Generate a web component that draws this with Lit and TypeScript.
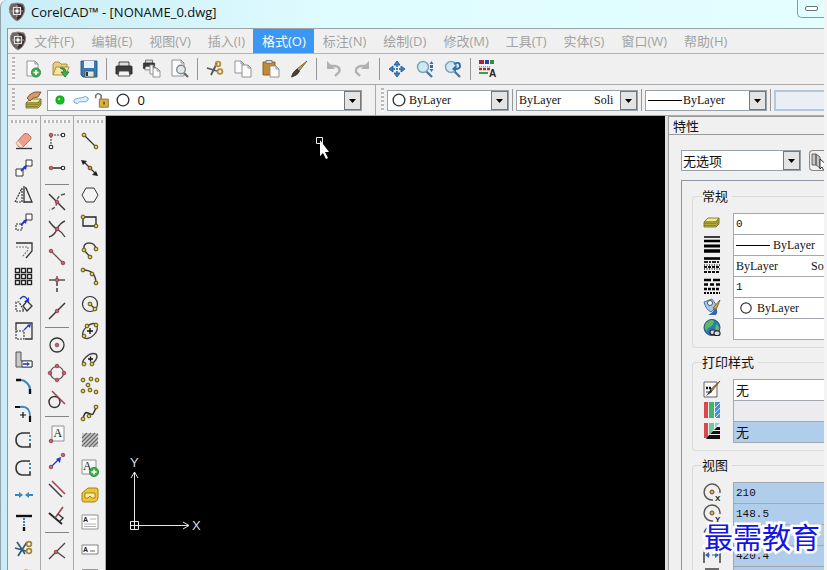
import { LitElement, html, svg, css, nothing } from "lit";
import { customElement, property } from "lit/decorators.js";
import { classMap } from "lit/directives/class-map.js";

const dot = (x: number, y: number, c = "#e0cf3a") =>
  svg`<circle cx=${x} cy=${y} r="1.9" fill=${c} stroke="#4a4417" stroke-width=".9"/>`;
const red = (x: number, y: number) =>
  svg`<circle cx=${x} cy=${y} r="1.8" fill="#c5606c" stroke="#8b3a48" stroke-width=".8"/>`;
const ring = (x: number, y: number) =>
  svg`<circle cx=${x} cy=${y} r="1.8" fill="#fff" stroke="#222" stroke-width="1.1"/>`;
const ln = (d: string, c = "#333", w = 1.3, dash = "") =>
  svg`<path d=${d} fill="none" stroke=${c} stroke-width=${w} stroke-dasharray=${dash || "none"}/>`;
const fl = (d: string, c: string, s = "none") =>
  svg`<path d=${d} fill=${c} stroke=${s} stroke-width=".9"/>`;
const letter = (x: number, y: number, t: string, size: number, serif = false) =>
  svg`<text x=${x} y=${y} font-size=${size} font-weight=${serif ? "normal" : "bold"} fill="#222" font-family=${serif ? "Liberation Serif, serif" : "Liberation Sans, sans-serif"}>${t}</text>`;
const plus = (x: number, y: number) =>
  svg`<circle cx=${x} cy=${y} r="4.6" fill="#3fae49" stroke="#23813a" stroke-width=".8"/>${ln(`M${x - 2.6} ${y}h5.2M${x} ${y - 2.6}v5.2`, "#fff", 1.6)}`;
const page = (x: number, y: number, w = 8, h = 11) =>
  fl(`M${x} ${y}h${w - 3}l3 3v${h - 3}h-${w}z M${x + w - 3} ${y}v3h3`, "#fbfbfb", "#888");
const lens = svg`${ln("M11 12l6 6", "#4b7a9c", 2.4)}<circle cx="8" cy="8" r="5.500" fill="#cfe8f6" stroke="#7fa5bd" stroke-width="1.5"/>`;
const scissors = svg`${ln("M2 9l10 3M6 16l6-12", "#555", 1.8)}<circle cx="13" cy="5" r="2.300" fill="none" stroke="#b58d2e" stroke-width="1.8"/><circle cx="15" cy="12.500" r="2.400" fill="none" stroke="#b58d2e" stroke-width="1.8"/>`;
const printer = svg`${fl("M5 3h10v5h-10z", "#ddd", "#333")}${fl("M2 8q0-1 1-1h14q1 0 1 1v7h-16z", "#3c3c3c", "#222")}${fl("M5 12h10l1 5h-12z", "#f4f4f4", "#444")}`;
const shield = svg`${fl("M4 2Q10 0 16 2Q19 6 17 11Q15 17 10 19Q5 17 3 11Q1 6 4 2z", "#6f6260", "#8e8888")}${fl("M10 2Q17 2 17 8Q15 16 10 18z", "#372c2c")}<rect x="6.500" y="5.500" width="7" height="7" fill="#4d4444" stroke="#e2e2e2" stroke-width="1.200"/>${ln("M10 3v12M4 9h12", "#ccc", 0.8)}<rect x="8.500" y="7.500" width="3" height="3" fill="#fff"/>`;
const layers = svg`${fl("M3 13l4-4h11l-3 4z", "#f0eb8c", "#77742c")}${fl("M3 13h12l3-4v6l-3 3h-12z", "#c8c04a", "#77742c")}${ln("M3 14.700h12l3-3.500M3 16.400h12l3-3.500", "#6f6b25", 0.8)}`;
const aBox = svg`${fl("M5 2h12v15h-12z", "#fafafa", "#888")}${letter(6.5, 13, "A", 12, true)}`;
const gauge = (t: string) => svg`<path d="M18 11A8 8 0 1 0 11 18" fill="none" stroke="#555" stroke-width="1.4"/><circle cx="10" cy="10" r="2" fill="#d8b26a" stroke="#6b4c1c"/>${t ? letter(13, 19, t, 8) : nothing}`;

const icons: Record<string, unknown> = {
  shield,
  new: svg`${page(4, 2, 11, 15)}${plus(13, 13.5)}`,
  open: svg`${fl("M2 16v-11l2-2h4l2 2h6v3", "#e8cd83", "#a98637")}${fl("M2 16l3-8h13l-3 8z", "#f7e3a4", "#a98637")}${fl("M9 9q6-1 6 4h3l-4 5l-4-5h3q0-3-4-4z", "#3fae49", "#23813a")}`,
  save: svg`${fl("M2 2h16v16h-14l-2-2z", "#3d78b8", "#24527f")}${fl("M5 2h10v7h-10z", "#e9f1f8")}${fl("M6 12h9v6h-9z", "#e3e6e9", "#365")}${fl("M7 13h2v4h-2z", "#333")}`,
  print: printer,
  prints: svg`<g transform="translate(0 -1) scale(.7)">${printer}</g>${page(8, 6, 6, 9)}${page(11, 9, 7, 9)}`,
  preview: svg`${page(2, 1, 12, 16)}${ln("M14 14l4 4", "#666", 2.2)}<circle cx="11" cy="10.500" r="4.300" fill="#dfe8ee" stroke="#888" stroke-width="1.4"/>`,
  cut: scissors,
  copy: svg`${page(2, 2, 9, 12)}${page(9, 6, 9, 12)}`,
  paste: svg`${fl("M2 3h12v13h-12z", "#c38a35", "#835a1c")}${fl("M5 1.500h6v3h-6z", "#d6d6d6", "#777")}${page(9, 7, 9, 11)}`,
  brush: svg`${fl("M18 2l-8 10-2-2z", "#cf9a50", "#7c5a2d")}${fl("M8 10l2.500 2.500q-2 4-8 5.500q1-5 5.500-8z", "#4a4038", "#333")}`,
  undo: svg`${ln("M5 7h6q6 1 4 6l-4 4", "#b0b0b0", 2.4)}${fl("M3 2v8h8z", "#b0b0b0")}`,
  redo: svg`${ln("M15 7h-6q-6 1-5 6l4 4", "#b0b0b0", 2.4)}${fl("M17 2v8h-8z", "#b0b0b0")}`,
  pan: svg`${fl("M10 2l3 4h-6zM10 18l3-4h-6zM2 10l4-3v6zM18 10l-4-3v6z", "#3c83c4", "#215a94")}${ln("M10 6v8M6 10h8", "#3c83c4", 2, "2 1")}`,
  zoom: svg`${lens}${fl("M16.500 2l2 3h-4zM16.500 13l2-3h-4zM15 6h3v3h-3z", "#2f6eb0")}`,
  zoomback: svg`${lens}${ln("M11 5q6-3 6 2q0 3-5 3", "#2f6eb0", 2)}${fl("M13 6v7l-4-3z", "#2f6eb0")}`,
  styles: svg`${fl("M1 1h5v4h-5z", "#a02648")}${fl("M7 1h4v4h-4z", "#2c3fae")}${fl("M12 1h4v4h-4z", "#2d9238")}${ln("M1 7.500h11", "#999", 1, "1 1")}${ln("M1 10h11", "#b03040", 2.5, "3 1")}${ln("M1 14h9", "#3aa048", 2)}${letter(11, 18, "A", 10)}`,
  layerman: svg`${layers}${fl("M4 8q3-5 8-6h6l-3 5q-6 0-8 4z", "#d59a6c", "#7b4a2a")}`,
  bulb: svg`<circle cx="10" cy="10" r="4.500" fill="#16c222" stroke="#0b8414"/>${fl("M8 8h2v2h-2z", "#9df5a0")}`,
  cloud: svg`${fl("M2 11q1-3 5-3t8-2q4 1 3 4q-2 3-6 2t-6 2q-4 0-4-3z", "#d8eefa", "#5a9ac4")}`,
  lock: svg`${ln("M3 8v-3q3-4 6 0v4", "#777", 1.8)}${fl("M7 9h10v9h-10z", "#d8b33e", "#7c6420")}${fl("M11.500 12h1.500v3h-1.500z", "#4d3d10")}`,
  circle: svg`<circle cx="10" cy="10" r="6.500" fill="#fff" stroke="#333" stroke-width="1.500"/>`,
  erase: svg`${fl("M2 12l8-9q2-1 4 0l3 3q0 2-1 3l-7 7h-4z", "#efa08c", "#ad6a5a")}${fl("M2 12l4 4h3l-5-6z", "#fbdcd3")}${ln("M2 17.500h16", "#333")}`,
  copyobj: svg`${fl("M12 2h6v6h-6zM2 11h7v7h-7z", "#fff", "#222")}${ln("M7 13l5-5", "#2436c8", 1.8)}${fl("M13 7l-1 5-3-3z", "#2436c8")}`,
  mirror: svg`${ln("M8 3v14h-7z", "#333", 1.2, "2 1")}${ln("M10 1v17M11 3h1l6 14h-8", "#333")}`,
  move: svg`${fl("M12 2h6v6h-6z", "#fff", "#222")}${ln("M2 12h6v6h-6z", "#333", 1.1, "2 1")}${ln("M7 13l5-5", "#2436c8", 1.8)}${fl("M13 7l-1 5-3-3z", "#2436c8")}`,
  offset: svg`${ln("M2 3h16v8l-6 7")}${ln("M2 7h12v3l-6 7", "#777", 1.1, "2 1")}`,
  pattern: svg`${[2, 8, 14].map((y) => [2, 8, 14].map((x) => svg`<rect x=${x - 0.5} y=${y - 0.5} width="4" height="4" fill="#fff" stroke="#222" stroke-width="1.4"/>`))}`,
  rotate: svg`${ln("M2 8v9h8l-5-9z", "#333", 1.1, "2 1")}${ln("M9 12l4-5 5 5-5 5z", "#333")}${ln("M6 5q4-5 7 0", "#2436c8", 1.4)}${fl("M15 3v5h-5z", "#2436c8")}`,
  scale: svg`${ln("M2 9v-7h16v16h-7", "#333")}${ln("M2 10h8v8h-8z", "#333", 1.1, "2 1")}${ln("M10 9l5-5", "#2436c8")}${fl("M17 3l-1 4-3-3z", "#2436c8")}`,
  stretch: svg`${fl("M2 3h5v9h11v6h-16z", "#c9c9c9", "#444")}${fl("M8 12h10v6h-10z", "#fff", "#333")}${ln("M9 15h5", "#2436c8", 1.6)}${fl("M16 15l-3-2v4z", "#2436c8")}`,
  fillet: svg`${ln("M2 4h5M16 13v5", "#111", 2.4)}${ln("M7 4q3 0 6 3t3 6", "#3a86be", 2.2)}`,
  chamfer: svg`${ln("M1 4h5M16 13v6", "#111", 2.2)}${ln("M6 4q5-1 8 2q2 3 2 7", "#3a86be", 1.8)}${ln("M6 12h6M9 9v6", "#111", 1.2)}`,
  split: svg`${ln("M16 3h-8q-6 1-6 7t6 7h8v-3", "#333", 1.6)}${ln("M16 5v9", "#3a86be", 2, "2 2")}`,
  weld: svg`${ln("M1 10h7M19 10h-7", "#3a86be", 2)}${fl("M9 10l-4-3v6zM11 10l4-3v6z", "#3a86be")}`,
  trim: svg`${ln("M2 4h16", "#111", 2.4)}${ln("M10 6v8", "#3a86be", 2, "2 1")}${ln("M10 15v4", "#111", 2.4)}`,
  explode: svg`${ln("M3 3l8 12M13 3l-9 14M1 9l11 3", "#345a7c", 1.7)}<circle cx="15" cy="5" r="2.400" fill="none" stroke="#a58434" stroke-width="1.7"/><circle cx="15" cy="12" r="2.400" fill="none" stroke="#a58434" stroke-width="1.7"/>`,
  ball: svg`<circle cx="12" cy="8" r="5" fill="#e8a768" stroke="#925b2a"/>`,
  track: svg`${ln("M4 4h10M4 5v9", "#444", 1.1, "2 1")}${red(4, 4)}${ring(16, 4)}${ring(4, 16)}`,
  ext: svg`${ln("M4 10h11", "#222", 1.4)}${red(4, 10)}${ring(16, 10)}`,
  intersect: svg`${ln("M2 2l16 16", "#333", 1.4)}${ln("M18 2q-8 1-8 8q-1 7-8 8", "#555", 1.4, "4 2")}${red(10, 10)}`,
  apparent: svg`${ln("M2 2q4 6 8 8q5 3 8 8M18 2q-5 2-8 8q-2 6-8 8", "#444", 1.4)}${red(10, 10)}`,
  endpt: svg`${ln("M5 5l11 11", "#7a4b55", 1.3)}${red(4, 4)}${red(16, 16)}`,
  midpt: svg`${ln("M2 6h16M10 2v4", "#555", 1.4)}${ln("M10 8v11", "#333", 1.4, "4 2")}${red(10, 6)}`,
  near: svg`${ln("M2 18l16-16", "#333", 1.4)}${red(10, 10)}`,
  center: svg`<circle cx="10" cy="10" r="7" fill="none" stroke="#333" stroke-width="1.3"/>${red(10, 10)}`,
  quad: svg`<circle cx="10" cy="10" r="6.500" fill="none" stroke="#555" stroke-width="1.2"/>${red(10, 3)}${red(17, 10)}${red(10, 17)}${red(3, 10)}`,
  tangent: svg`<circle cx="7.500" cy="12" r="5.500" fill="none" stroke="#333" stroke-width="1.400"/>${ln("M5 1l13 13", "#a0414e", 1.5)}`,
  insert: svg`${aBox}${red(4, 17)}`,
  node: svg`${ln("M5 15l8-8", "#2436c8", 1.2)}${fl("M14 6l-1 6-4-4z", "#2436c8")}${red(4, 16)}${red(16, 4)}`,
  parallel: svg`${ln("M2 5l13 13", "#444", 1.6)}${ln("M5 2l13 13", "#b0414e", 1.6)}`,
  perp: svg`${ln("M2 7l13 11", "#222", 1.8)}${ln("M8 12l8-11", "#a0414e", 1.6)}${ln("M11 8l5 4-4 4", "#333", 1.4)}`,
  snap: svg`${ln("M2 19l16-16M10 12l8 6", "#444", 1.3)}${red(9, 12)}`,
  hook: svg`${ln("M3 3v14M3 10h4q4 2 10 2", "#333", 1.4)}`,
  line: svg`${ln("M4 4l12 12")}${dot(4, 4)}${dot(16, 16)}`,
  xline: svg`${ln("M3 3l14 14")}${fl("M1 2l6 1-4 4zM18 18l-6-1 4-4z", "#222")}${dot(10, 10, "#e08a3a")}`,
  polygon: svg`${fl("M6 3h8l4 7-4 7h-8l-4-7z", "#f4f4f4", "#222")}`,
  rect: svg`${ln("M3 5h13v9h-13z", "#222")}${dot(3, 5)}${dot(16, 14)}`,
  arc3: svg`${ln("M4 10q-1-7 5-7q6 0 7 6M4 10l7 8", "#444", 1.5)}${dot(4, 10)}${dot(16, 9)}${dot(10, 17)}`,
  arc: svg`${ln("M3 3q13 0 13 14", "#444", 1.4)}${dot(3, 3)}${dot(12, 7)}${dot(16, 16)}`,
  circ: svg`<circle cx="10" cy="10" r="7.500" fill="none" stroke="#333" stroke-width="1.200"/>${ln("M10 10l5 5")}${dot(10, 10)}${dot(15, 15)}`,
  ellipse: svg`<ellipse cx="10" cy="10" rx="9" ry="5.500" transform="rotate(-45 10 10)" fill="none" stroke="#444" stroke-width="1.300"/>${ln("M7 10h6M10 7v6", "#111")}${dot(16, 4)}${dot(7, 5)}${dot(4, 15)}`,
  earc: svg`${ln("M4 15q-3-2 2-7t10-3q3 4-4 10", "#444", 1.5)}${ln("M8 10h5M10.500 7.500v5", "#111")}${dot(4, 15)}${dot(12, 15)}`,
  points: svg`${dot(3, 4)}${dot(11, 3)}${dot(17, 4)}${dot(8, 9)}${dot(3, 15)}${dot(10, 14)}${dot(16, 16)}`,
  spline: svg`${ln("M3 17q1-9 5-7t5 1q2-4 4-8", "#333", 1.5)}${dot(3, 16)}${dot(9, 13)}${dot(16, 4)}`,
  hatch: svg`${fl("M2 3h16v14h-16z", "#c6c6c6")}${ln("M2 8l5-5M2 12l9-9M2 16l13-13M5 17l13-13M9 17l9-9M13 17l5-5", "#6a6a6a", 1.2)}`,
  textadd: svg`${fl("M2 2h14v14h-14z", "#f8f8f8", "#888")}${letter(3, 12, "A", 12, true)}${plus(14, 14)}`,
  tag: svg`${fl("M2 8l6-5h8q2 0 2 2v7q0 5-5 5h-9q-2 0-2-2z", "#ecc735", "#9a761c")}${fl("M5 8h10v5h-3l-2-2-2 2h-3z", "#fff1a2", "#9a761c")}`,
  note: svg`${fl("M2 3h16v14h-16z", "#fdfdfd", "#888")}${letter(3, 10, "A", 7)}${ln("M10 7h6M4 12h12M4 14.500h12", "#aaa", 0.9)}`,
  label: svg`${fl("M2 6h16v9h-16z", "#fdfdfd", "#777")}${letter(3, 13, "A", 7)}${ln("M10 12h5", "#888")}`,
  table: svg`${fl("M2 3h16v14h-16z", "#777", "#333")}${ln("M2 5h16", "#e0cf3a", 2, "3 2")}`,
  layers: svg`<g transform="translate(-1 -4)">${layers}</g>`,
  weight: svg`${ln("M2 3h16", "#000", 1.5)}${ln("M2 7h16", "#000", 2.5)}${ln("M2 12h16", "#000", 3)}${ln("M2 17h16", "#000", 3.5)}`,
  ltype: svg`${ln("M2 3.500h16", "#000", 2.6)}${ln("M2 7h16", "#222", 2, "4 1 2 1")}${ln("M2 10h16M2 14h16", "#333", 1.6, "1 1.500")}${ln("M2 12h16M2 17h16", "#111", 2, "3 1")}`,
  lscale: svg`${ln("M2 4h16", "#000", 2.6, "7 2")}${ln("M2 8.500h16", "#000", 2.4, "4 2")}${ln("M2 13h16", "#000", 2.4, "3 1")}${ln("M2 17h16", "#000", 2.2, "2 1")}`,
  paint: svg`${fl("M2 5l8-3 5 7-6 6q-5-2-7-10z", "#a9c7e4", "#456d97")}<circle cx="8" cy="6" r="2.500" fill="#fff" stroke="#456"/>${fl("M18 3l-4 10-3-2z", "#e2a343", "#865c1e")}${fl("M13 11q4 3 1 7h-8q5-2 7-7z", "#3168b5")}`,
  globe: svg`<circle cx="10" cy="9.500" r="8" fill="#2b79be" stroke="#1b4f83"/>${fl("M4 5q5-5 8-2q-1 5-4 6t-3 4q-4-3-1-8zM14 6q4 2 3 6h-4z", "#5fbb58")}<rect x="8" y="12" width="6" height="4.500" rx="2" fill="#ddd" stroke="#222" stroke-width="1.200"/><rect x="12" y="13" width="6" height="4.500" rx="2" fill="#ddd" stroke="#222" stroke-width="1.200"/>`,
  pstyle: svg`${fl("M2 3h13v15h-13z", "#f8f8f8", "#555")}${ln("M4 9h6", "#111", 2.4, "2 1")}${ln("M4 13h4", "#777", 1.4)}${fl("M18 2l-8 10-2-1z", "#c88b48", "#74491d")}${fl("M9 10l1 3-6 4z", "#333")}`,
  ptable: svg`${fl("M2 2h4v16h-4z", "#d8484c")}${fl("M7 2h5v16h-5z", "#43b56a")}${fl("M13 2h5v16h-5z", "#4b8fce")}${ln("M13 8l5-5M13 13l5-5M13 18l5-5", "#cfe2f3", 1)}`,
  pcolor: svg`${fl("M2 2h4v15h-4z", "#d8484c")}${fl("M7 2h5v6l-5 6z", "#72c79c")}${fl("M13 2h5l-5 5z", "#9cc4e6")}${fl("M15 6h3v3h-6zM11 10h7v3h-10zM7 14h11v4h-14z", "#111")}`,
  gx: gauge("X"),
  gy: gauge("Y"),
  gz: gauge(""),
  hsize: svg`${ln("M2 3v15M18 3v15", "#333", 1.4)}${ln("M4 10h12", "#3a63b5", 1.2, "4 2")}${fl("M3 10l4-3v6zM17 10l-4-3v6z", "#3a63b5")}`,
  vsize: svg`${ln("M3 3h14", "#333", 1.4)}${ln("M10 5v12", "#3a63b5", 1.6)}`,
  pick: svg`${fl("M2 3h4v11h-4zM6 3l4 3v11l-4-3z", "#c5c5c5", "#555")}${fl("M10 8l8 7h-4l2 4-2 1-2-4-2 2z", "#fff", "#222")}`,
};

@customElement("cad-icon")
export class CadIcon extends LitElement {
  @property() name = "";
  static styles = css`
    :host { display: block; width: 20px; height: 20px; flex: none; }
    svg { display: block; width: 100%; height: 100%; }
  `;
  render() {
    return html`<svg viewBox="0 0 20 20" aria-hidden="true">${icons[this.name]}</svg>`;
  }
}

const menus = ["文件(F)", "编辑(E)", "视图(V)", "插入(I)", "格式(O)", "标注(N)", "绘制(D)", "修改(M)", "工具(T)", "实体(S)", "窗口(W)", "帮助(H)"];
const standard = "new open save | print prints preview | cut copy paste brush | undo redo | pan zoom zoomback | styles".split(" ");
const columns = [
  "erase copyobj mirror move offset pattern rotate scale stretch fillet chamfer split split weld trim explode ball",
  "track ext | intersect apparent endpt midpt near | center quad tangent | insert node parallel perp | snap hook",
  "line xline polygon rect arc3 arc circ ellipse earc points spline hatch textadd tag note label table",
].map((c) => c.split(" "));

type Row = { icon: string; value: string; kind?: string; lead?: string };
const groups: { title: string; rows: Row[] }[] = [
  {
    title: "常规",
    rows: [
      { icon: "layers", value: "0" },
      { icon: "weight", value: "ByLayer", kind: "serif", lead: "line" },
      { icon: "ltype", value: "ByLayer\u00a0\u00a0\u00a0\u00a0\u00a0\u00a0\u00a0\u00a0\u00a0\u00a0\u00a0Solid", kind: "serif" },
      { icon: "lscale", value: "1" },
      { icon: "paint", value: "ByLayer", kind: "serif", lead: "circle" },
      { icon: "globe", value: "" },
    ],
  },
  {
    title: "打印样式",
    rows: [
      { icon: "pstyle", value: "无", kind: "cjk" },
      { icon: "ptable", value: "", kind: "off" },
      { icon: "pcolor", value: "无", kind: "cjk blue" },
    ],
  },
  {
    title: "视图",
    rows: [
      { icon: "gx", value: "210", kind: "blue" },
      { icon: "gy", value: "148.5", kind: "blue" },
      { icon: "gz", value: "", kind: "blue" },
      { icon: "hsize", value: "420.4", kind: "blue" },
      { icon: "vsize", value: "", kind: "blue" },
    ],
  },
];

@customElement("app-root")
export class AppRoot extends LitElement {
  static styles = css`
    :host {
      display: block;
      height: 100vh;
      overflow: hidden;
      background: #f4f4f4;
      padding-right: 3px;
      box-sizing: border-box;
      font: 13px/18px "Open Sans", "Noto Sans CJK SC", sans-serif;
      color: #111;
    }
    * { box-sizing: border-box; }
    button, select, input { font: inherit; color: inherit; margin: 0; padding: 0; border: 0; border-radius: 0; background: none; }
    .window {
      display: flex;
      flex-direction: column;
      height: 100%;
      padding-left: 6px;
      border-left: 1px solid #8fa3aa;
      border-top-left-radius: 7px;
      background: linear-gradient(90deg, #c9ecf6, #dffcff 40%, #e2feff);
    }
    .title { display: flex; align-items: center; gap: 4px; height: 28px; padding-bottom: 4px; flex: none; }
    .title h1 { flex: 1; margin: 0; font: inherit; white-space: nowrap; }
    .min { align-self: flex-start; width: 27px; height: 18px; border: 1px solid #8b979b; border-width: 0 0 1px 1px; border-bottom-left-radius: 5px; display: grid; place-items: center; }
    .min i { width: 13px; height: 5px; border: 1px solid #6a7073; border-radius: 2px; background: #fff; }
    .frame { flex: 1; min-height: 0; display: flex; flex-direction: column; background: #f0f0f0; border-left: 1px solid #8f9699; border-top: 1px solid #9aa3a5; }
    .menu { display: flex; align-items: stretch; height: 25px; flex: none; border-bottom: 1px solid #b4b4b4; }
    .menu cad-icon { align-self: center; margin-right: -3px; }
    .menu button { padding: 0 8px 0 9px; color: #a2a2a2; white-space: nowrap; }
    .menu button.on { background: #3b97f3; color: #fff; }
    .bar { display: flex; align-items: center; height: 31px; flex: none; border-bottom: 1px solid #a9a9a9; padding-left: 4px; }
    .grip { width: 3px; height: 24px; flex: none; background: repeating-linear-gradient(#b8b8b8 0 2px, #f8f8f8 2px 4px); }
    .tool { display: grid; place-items: center; width: 28px; height: 27px; flex: none; }
    .bar .grip + .tool { margin-left: 4px; }
    .sep { width: 1px; height: 22px; margin: 0 3px; background: #979797; flex: none; }
    .combo { display: flex; align-items: center; gap: 1px; height: 21px; min-width: 0; flex: none; width: 122px; border: 1px solid #98a0a8; background: #fff; padding-left: 2px; }
    .combo.wide { width: 315px; }
    .combo select {
      flex: 1; min-width: 0; height: 19px; appearance: none; outline: 0;
      background: url("data:image/svg+xml,%3Csvg xmlns='http://www.w3.org/2000/svg' width='17' height='19'%3E%3Crect x='.5' y='.5' width='16' height='18' fill='%23e4e4e4' stroke='%23777'/%3E%3Cpath d='M5 8h7l-3.500 4z'/%3E%3C/svg%3E") right center no-repeat;
      padding-right: 18px;
    }
    .combo .serif { font: 12px/16px "Liberation Serif", serif; }
    .combo .small { width: 18px; height: 18px; }
    .combo.wide .small { width: 20px; }
    .stroke { width: 34px; height: 1px; background: #000; flex: none; }
    .edge { align-self: stretch; width: 1px; margin: 0 5px 0 13px; background: #a9a9a9; flex: none; }
    .edge + .grip { margin-right: 3px; }
    .slot { flex: 1; height: 21px; border: 2px solid #b4c8da; border-right: 0; background: #e9eff5; min-width: 0; }
    .body { flex: 1; min-height: 0; display: flex; overflow: hidden; }
    .col { display: flex; flex-direction: column; align-items: center; width: 33px; flex: none; padding-top: 4px; border-right: 1px solid #aaa; overflow: hidden; }
    .col:last-of-type { width: 32px; }
    .col .hgrip { width: 26px; height: 3px; flex: none; margin-bottom: 4px; background: repeating-linear-gradient(90deg, #b8b8b8 0 2px, #f8f8f8 2px 4px); }
    .col .tool:nth-of-type(4n) { height: 28px; }
    .col .rule { width: 24px; height: 1px; margin: 3px 0; background: #858585; flex: none; }
    .canvas { flex: 1; min-width: 0; position: relative; background: #000; overflow: hidden; }
    .ucs { position: absolute; left: 20px; bottom: 35px; width: 80px; height: 80px; }
    .pointer { position: absolute; left: 209px; top: 19px; width: 16px; height: 26px; }
    .panel { width: 159px; flex: none; border-left: 3px solid #dedede; display: flex; flex-direction: column; position: relative; }
    .panel h2 { margin: 0; font: inherit; height: 19px; padding-left: 4px; border: 1px solid #9a9a9a; border-right: 0; flex: none; }
    .picker { display: flex; gap: 8px; padding: 15px 0 9px 12px; border-left: 1px solid #9a9a9a; }
    .picker .combo { width: 120px; padding-left: 1px; }
    .picker button { flex: 1; height: 21px; min-width: 0; overflow: hidden; border: 1px solid #888; border-right: 0; border-radius: 4px 0 0 4px; }
    .scroll { flex: 1; min-height: 0; border-left: 1px solid #9a9a9a; padding-left: 12px; overflow: hidden; display: flex; }
    .list { flex: 1; min-width: 0; border: 1px solid #8d97a1; border-width: 1px 0 0 1px; padding: 6px 0 0 10px; overflow: hidden; }
    fieldset { min-width: 0; margin: 0 0 5px; padding: 8px 0 8px 9px; border: 1px solid #dadada; border-right: 0; border-radius: 4px 0 0 4px; }
    legend { padding: 0 4px 0 0; height: 18px; }
    .row { display: flex; align-items: flex-start; gap: 11px; height: 21px; }
    .field { display: flex; align-items: center; flex: 1; min-width: 0; height: 22px; padding-left: 2px; border: 1px solid #a3a8b0; border-right: 0; background: #fff; overflow: hidden; }
    .field input { flex: 1; min-width: 0; height: 20px; outline: 0; font: 11px/20px "Liberation Mono", monospace; }
    .field.serif input { font: 12px/20px "Liberation Serif", serif; }
    .field.cjk input { font: 13px/20px "Noto Sans CJK SC", sans-serif; }
    .field.blue { background: #b1cdec; }
    .field.off { background: #ececf0; }
    .field .small { height: 16px; margin-right: 1px; }
    .field .stroke { margin-right: 3px; }
    .brand { position: absolute; right: 4px; bottom: 17px; font: 400 29px/34px "Noto Sans CJK SC", sans-serif; color: #1414e6; white-space: nowrap; -webkit-text-stroke: 5px #fff; paint-order: stroke fill; }
  `;

  private tool(name: string, rule = "sep") {
    return name === "|"
      ? html`<span class=${rule}></span>`
      : html`<button class="tool" aria-label=${name}><cad-icon name=${name}></cad-icon></button>`;
  }

  private lead(kind?: string) {
    if (kind === "line") return html`<span class="stroke"></span>`;
    return kind ? html`<cad-icon class="small" name=${kind}></cad-icon>` : nothing;
  }

  private combo(label: string, value: string, lead?: string) {
    return html`<div class="combo">
      ${this.lead(lead)}
      <select class="serif" aria-label=${label}><option>${value}</option></select>
    </div>`;
  }

  private row(r: Row) {
    return html`<label class="row">
      <cad-icon name=${r.icon}></cad-icon>
      <span class="field ${r.kind ?? ""}">${this.lead(r.lead)}<input aria-label=${r.icon} .value=${r.value} ?disabled=${r.kind === "off"} /></span>
    </label>`;
  }

  render() {
    return html`
      <div class="window">
        <header class="title">
          <cad-icon name="shield"></cad-icon>
          <h1>CorelCAD™ - [NONAME_0.dwg]</h1>
          <button class="min" aria-label="最小化"><i></i></button>
        </header>
        <div class="frame">
          <nav class="menu">
            <cad-icon name="shield"></cad-icon>
            ${menus.map((m, i) => html`<button class=${classMap({ on: i === 4 })}>${m}</button>`)}
          </nav>
          <div class="bar"><span class="grip"></span>${standard.map((n) => this.tool(n))}</div>
          <div class="bar">
            <span class="grip"></span>${this.tool("layerman")}
            <div class="combo wide">
              ${["bulb", "cloud", "lock", "circle"].map((n) => this.lead(n))}
              <select aria-label="图层"><option>\u00a00</option></select>
            </div>
            <span class="edge"></span><span class="grip"></span>
            ${this.combo("颜色", "ByLayer", "circle")}<span class="sep"></span>
            ${this.combo("线型", "ByLayer\u00a0\u00a0\u00a0\u00a0\u00a0\u00a0\u00a0\u00a0\u00a0\u00a0\u00a0Soli")}<span class="sep"></span>
            ${this.combo("线宽", "ByLayer", "line")}<span class="sep"></span>
            <span class="slot"></span>
          </div>
          <div class="body">
            ${columns.map((c) => html`<div class="col"><span class="hgrip"></span>${c.map((n) => this.tool(n, "rule"))}</div>`)}
            <main class="canvas">
              <svg class="ucs" viewBox="0 0 80 80" fill="none" stroke="#e8e8e8">
                <path d="M8.500 75V17M5 23l3.500-6 3.500 6M4 70.500H62M57 67l6 3.500-6 3.500M4.500 66.500h8v8h-8z" />
                <text x="4" y="12" font-size="13" font-family="Liberation Sans, sans-serif" fill="#ddd" stroke="none">Y</text>
                <text x="66" y="75" font-size="13" font-family="Liberation Sans, sans-serif" fill="#ddd" stroke="none">X</text>
              </svg>
              <svg class="pointer" viewBox="0 0 16 26">
                <path d="M1.500 2.500h6v6h-6z" fill="none" stroke="#eee" />
                <path d="M5 5v16l3-3 3 6 2-1-3-6h4z" fill="#fff" />
              </svg>
            </main>
            <aside class="panel">
              <h2>特性</h2>
              <div class="picker">
                <div class="combo"><select aria-label="选择"><option>无选项</option></select></div>
                <button aria-label="选取"><cad-icon name="pick"></cad-icon></button>
              </div>
              <div class="scroll">
                <div class="list">
                  ${groups.map((g) => html`<fieldset><legend>${g.title}</legend>${g.rows.map((r) => this.row(r))}</fieldset>`)}
                </div>
              </div>
              <div class="brand">最需教育</div>
            </aside>
          </div>
        </div>
      </div>
    `;
  }
}
